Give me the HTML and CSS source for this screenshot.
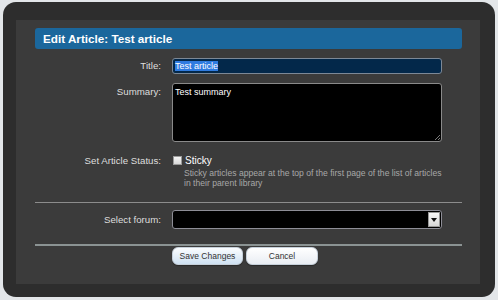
FILE: index.html
```html
<!DOCTYPE html>
<html>
<head>
<meta charset="utf-8">
<link rel="stylesheet" href="styles.css">
</head>
<body>
<div class="frame">
  <div class="panel">
    <h2 class="heading">Edit Article: Test article</h2>
    <div class="row row-title">
      <label class="label">Title:</label>
      <div class="input"><span class="sel">Test article</span></div>
    </div>
    <div class="row row-summary">
      <label class="label label-top">Summary:</label>
      <div class="textarea">Test summary<span class="grip"></span></div>
    </div>
    <div class="row row-status">
      <label class="label">Set Article Status:</label>
      <div class="control">
        <div class="check-line"><span class="checkbox"></span><span class="check-text">Sticky</span></div>
        <p class="hint">Sticky articles appear at the top of the first page of the list of articles in their parent library</p>
      </div>
    </div>
    <hr class="sep">
    <div class="row row-select">
      <label class="label">Select forum:</label>
      <div class="select"><span class="arrow"></span></div>
    </div>
    <hr class="sep sep2">
    <div class="buttons">
      <button class="btn btn-primary">Save Changes</button>
      <button class="btn">Cancel</button>
    </div>
  </div>
</div>
</body>
</html>
```
FILE: styles.css
```css
html, body {
  margin: 0;
  padding: 0;
}
body {
  width: 498px;
  height: 300px;
  overflow: hidden;
  background: #e3e6e9;
  font-family: "Liberation Sans", Arial, sans-serif;
}
.frame {
  box-sizing: border-box;
  margin: 2px 3px 0 3px;
  height: 295px;
  border-radius: 13px;
  background: #2d2d2d;
  padding: 18px 15px 13px 13px;
}
.panel {
  box-sizing: border-box;
  height: 264px;
  background: #3b3b3b;
  padding: 8px 18px 0 19px;
}
.heading {
  margin: 0;
  height: 21px;
  line-height: 21px;
  background: #1b679c;
  border-radius: 3px;
  color: #fff;
  font-size: 11.7px;
  font-weight: bold;
  padding-left: 8px;
}
.row {
  display: flex;
  align-items: flex-start;
}
.label {
  width: 126px;
  flex: none;
  text-align: right;
  color: #dedede;
  font-size: 9.7px;
  line-height: 16px;
  margin-right: 11px;
}
.row-title {
  margin-top: 9px;
}
.input {
  box-sizing: border-box;
  width: 270px;
  height: 16px;
  border: 1px solid #7c8896;
  border-radius: 3px;
  background: #03284a;
  padding: 1px 2px;
  font-size: 9px;
  line-height: 12px;
  color: #fff;
}
.sel {
  background: #2f7be0;
  color: #fff;
}
.row-summary {
  margin-top: 9px;
}
.label-top {
  padding-top: 1px;
}
.textarea {
  position: relative;
  box-sizing: border-box;
  width: 270px;
  height: 59px;
  border: 1px solid #8a8a8a;
  border-radius: 3px;
  background: #000;
  color: #fff;
  font-size: 9px;
  line-height: 12px;
  padding: 2px 2px;
}
.grip {
  position: absolute;
  right: 1px;
  bottom: 1px;
  width: 5px;
  height: 5px;
  background: linear-gradient(135deg, transparent 45%, #777 45%, #777 55%, transparent 55%, transparent 75%, #777 75%, #777 85%, transparent 85%);
}
.row-status {
  margin-top: 11px;
}
.row-status .label {
  line-height: 15px;
}
.check-line {
  display: flex;
  align-items: center;
  height: 15px;
}
.checkbox {
  box-sizing: border-box;
  width: 9px;
  height: 9px;
  border: 1px solid #9a9a9a;
  background: linear-gradient(#f4f4f4, #d8d8d8);
  margin: 0 3px 0 1px;
}
.check-text {
  color: #fff;
  font-size: 10px;
}
.hint {
  margin: 0 0 0 12px;
  width: 258px;
  color: #a8a8a8;
  font-size: 8.6px;
  line-height: 10px;
}
.sep {
  margin: 14px 0 0 0;
  border: 0;
  border-top: 1px solid #8c8c8c;
  height: 0;
}
.row-select {
  margin-top: 7px;
}
.row-select .label {
  line-height: 19px;
}
.select {
  position: relative;
  box-sizing: border-box;
  width: 270px;
  height: 19px;
  border: 1px solid #8d8d96;
  border-radius: 3px;
  background: #000;
}
.arrow {
  position: absolute;
  right: 1px;
  top: 1px;
  width: 12px;
  height: 15px;
  box-sizing: border-box;
  border: 1px solid #999;
  background: linear-gradient(#f8f8f8, #d6d6d6);
}
.arrow::after {
  content: "";
  position: absolute;
  left: 2px;
  top: 5px;
  border-left: 3px solid transparent;
  border-right: 3px solid transparent;
  border-top: 4px solid #111;
}
.sep2 {
  margin-top: 15px;
  border-top: 2px solid #8b9393;
}
.buttons {
  display: flex;
  gap: 3px;
  margin: 1px 0 0 137px;
}
.btn {
  box-sizing: border-box;
  height: 18px;
  width: 71px;
  padding: 0;
  border: 1px solid #c6d0da;
  border-radius: 6px;
  background: linear-gradient(#ffffff, #e9edf3);
  color: #333;
  font-family: "Liberation Sans", Arial, sans-serif;
  font-size: 8.5px;
  line-height: 16px;
  box-shadow: 0 1px 1px rgba(0, 0, 0, 0.3);
}
.btn + .btn {
  width: 72px;
}
.btn-primary {
  background: linear-gradient(#fbfdff, #cfe1f2);
}
```
